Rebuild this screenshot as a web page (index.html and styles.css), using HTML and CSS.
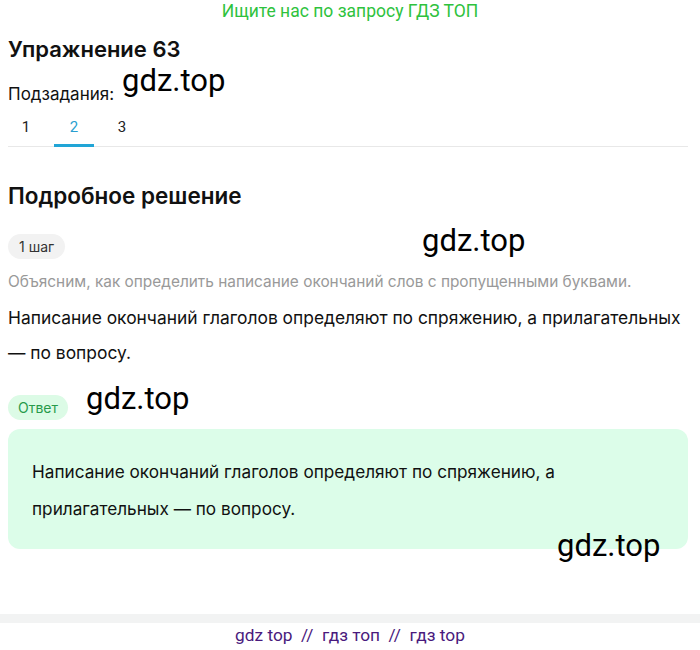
FILE: index.html
```html
<!DOCTYPE html>
<html lang="ru">
<head>
    <meta charset="UTF-8">
    <meta name="viewport" content="width=device-width, initial-scale=1.0">
    <title>Упражнение 63</title>
    <link rel="stylesheet" href="styles.css">
</head>
<body>

    <div class="promo">Ищите нас по запросу ГДЗ ТОП</div>

    <div class="page">
        <h1 class="title">Упражнение 63</h1>

        <div class="subtasks">
            <span class="subtasks-label">Подзадания:</span>
            <span class="mark mark-1">gdz.top</span>
        </div>

        <div class="tabs">
            <a class="tab">1</a>
            <a class="tab active">2</a>
            <a class="tab">3</a>
        </div>

        <h2 class="section-title">Подробное решение</h2>

        <div class="step">
            <span class="pill">1 шаг</span>
            <span class="mark mark-2">gdz.top</span>
        </div>
        <p class="hint">Объясним, как определить написание окончаний слов с пропущенными буквами.</p>
        <p class="text">Написание окончаний глаголов определяют по спряжению, а прилагательных — по вопросу.</p>

        <div class="step answer-step">
            <span class="pill pill-green">Ответ</span>
            <span class="mark mark-3">gdz.top</span>
        </div>
        <div class="answer">
            <p>Написание окончаний глаголов определяют по спряжению, а<br>прилагательных — по вопросу.</p>
            <span class="mark mark-4">gdz.top</span>
        </div>
    </div>

    <div class="band"></div>
    <div class="footer">gdz top&nbsp; //&nbsp; гдз топ&nbsp; //&nbsp; гдз top</div>

</body>
</html>
```

FILE: styles.css
```css
body {
    margin: 0;
    font-family: Inter, "Noto Sans", sans-serif;
    color: #111;
    background-color: #fff;
}
.promo {
    font-family: Roboto, sans-serif;
    font-size: 17.5px;
    line-height: 22px;
    color: #2ec23d;
    text-align: center;
}
.page {
    width: 680px;
    margin-left: 8px;
}
.title {
    margin: 14px 0 0;
    font-size: 22px;
    line-height: 26px;
    font-weight: 600;
}
.subtasks {
    position: relative;
    margin-top: 20px;
    height: 24px;
}
.subtasks-label {
    font-size: 17px;
    line-height: 24px;
}
.mark {
    position: absolute;
    font-family: Roboto, sans-serif;
    font-size: 31px;
    color: #000;
    line-height: 1;
}
.mark-1 { left: 114px; top: -17px; }
.tabs {
    display: flex;
    margin-top: 4px;
    border-bottom: 1px solid #e8e8e8;
}
.tab {
    width: 40px;
    margin-left: 8px;
    text-align: center;
    font-family: Roboto, sans-serif;
    font-size: 15px;
    line-height: 34px;
    color: #222;
    border-bottom: 3px solid transparent;
    margin-bottom: -1px;
}
.tab:first-child {
    margin-left: -2px;
}
.tab.active {
    color: #2a9fd0;
    border-bottom-color: #21a5d6;
}
.section-title {
    margin: 35px 0 0;
    font-size: 22.5px;
    line-height: 28px;
    font-weight: 600;
}
.step {
    position: relative;
    margin-top: 24px;
    height: 25px;
}
.pill {
    display: inline-block;
    padding: 0 11px;
    height: 25px;
    line-height: 25px;
    border-radius: 13px;
    background-color: #f2f2f2;
    font-size: 14px;
    color: #333;
}
.mark-2 { left: 414px; top: -9px; }
.hint {
    margin: 12px 0 0;
    font-size: 15.4px;
    line-height: 22px;
    color: #999;
}
.text {
    margin: 7px 0 0;
    font-size: 17.4px;
    line-height: 35px;
}
.answer-step {
    margin-top: 25px;
}
.pill-green {
    padding: 0 10px;
    background-color: #dcfbe6;
    color: #279a4a;
}
.mark-3 { left: 78px; top: -12px; }
.answer {
    position: relative;
    margin-top: 9px;
    padding: 24px 24px 22px;
    height: 74px;
    border-radius: 12px;
    background-color: #dcfde9;
}
.answer p {
    margin: 0;
    font-size: 17.2px;
    line-height: 37px;
}
.mark-4 { left: 549px; top: 101px; }
.band {
    margin-top: 65px;
    height: 9px;
    background-color: #f2f3f3;
}
.footer {
    text-align: center;
    font-family: Roboto, sans-serif;
    font-size: 17.3px;
    line-height: 24px;
    color: #4a1a7d;
}
```
